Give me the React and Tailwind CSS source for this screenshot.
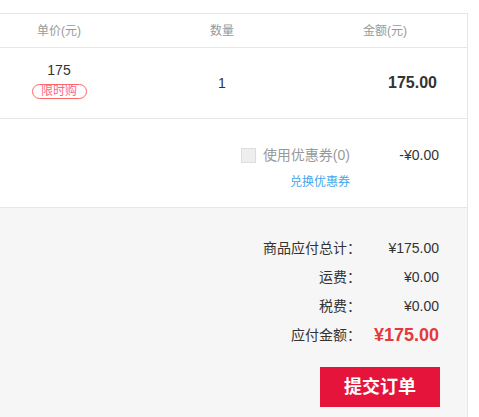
export default function App() {
  const font = { fontFamily: '"Liberation Sans", Arial, "Noto Sans CJK SC", sans-serif' };
  return (
    <div className="w-[479px] h-[417px] bg-white pt-[13px] overflow-hidden" style={font}>
      <div className="w-[468px] h-[404px] border-t border-r border-[#e6e6e6] flex flex-col">
        {/* header */}
        <div className="flex h-[34px] border-b border-[#e6e6e6] items-center text-[12px] text-[#999]">
          <div className="w-[118px] text-center">单价(元)</div>
          <div className="w-[208px] text-center">数量</div>
          <div className="w-[118px] text-center">金额(元)</div>
        </div>
        {/* item */}
        <div className="flex h-[71px] border-b border-[#e6e6e6] text-[#333]">
          <div className="w-[118px] flex flex-col items-center pt-[12px]">
            <div className="text-[14px] leading-[20px]">175</div>
            <div className="mt-[4px] w-[55px] h-[15px] rounded-full border border-[#ff6666] text-[#ff6680] text-[12px] leading-[13px] text-center">限时购</div>
          </div>
          <div className="w-[208px] flex items-center justify-center text-[14px]">1</div>
          <div className="flex-1 flex items-center justify-end pr-[30px] text-[16px] font-bold">175.00</div>
        </div>
        {/* coupon */}
        <div className="h-[89px] border-b border-[#e6e6e6] pt-[26px] pr-[28px] flex flex-col items-end">
          <div className="flex items-center h-[20px]">
            <div className="flex items-center justify-end">
              <div className="w-[15px] h-[15px] bg-[#eeeeee] border border-[#dddddd] mr-[7px]" />
              <span className="text-[14px] text-[#999]">使用优惠券(0)</span>
            </div>
            <div className="w-[89px] text-right text-[14px] text-[#333]">-¥0.00</div>
          </div>
          <div className="flex mt-[8px]">
            <span className="text-[12px] leading-[18px] text-[#45a6ee]">兑换优惠券</span>
            <div className="w-[89px]" />
          </div>
        </div>
        {/* summary */}
        <div className="flex-1 bg-[#f6f6f6] pt-[26px] pr-[28px] flex flex-col items-end text-[14px] text-[#333]">
          <div className="flex h-[29px] items-center">
            <span>商品应付总计：</span>
            <span className="w-[78px] text-right">¥175.00</span>
          </div>
          <div className="flex h-[29px] items-center">
            <span>运费：</span>
            <span className="w-[78px] text-right">¥0.00</span>
          </div>
          <div className="flex h-[29px] items-center">
            <span>税费：</span>
            <span className="w-[78px] text-right">¥0.00</span>
          </div>
          <div className="flex h-[29px] items-center">
            <span>应付金额：</span>
            <span className="w-[78px] text-right text-[18px] font-bold text-[#e4393c]">¥175.00</span>
          </div>
          <button className="mt-[17px] mr-[-1px] w-[120px] h-[40px] bg-[#e4143a] text-white text-[18px] font-bold">提交订单</button>
        </div>
      </div>
    </div>
  );
}
